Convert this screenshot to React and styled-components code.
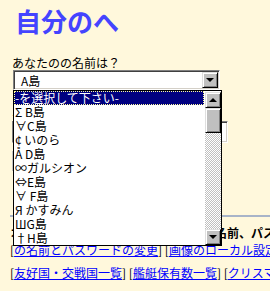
import React from 'react';
import styled, { createGlobalStyle } from 'styled-components';

const GlobalStyle = createGlobalStyle`
  html, body { margin: 0; padding: 0; background: #fff8dc; overflow: hidden; }
  body {
    font-family: "Noto Sans CJK JP", "Liberation Sans", sans-serif;
    font-size: 12px;
    color: #000;
  }
`;

const islands = [
  '-を選択して下さい-',
  'Σ B島',
  '∀C島',
  '¢ いのら',
  'Å D島',
  '∞ガルシオン',
  '⇔E島',
  '∀ F島',
  'Я かすみん',
  'ШG島',
  '†H島',
];

const Page = styled.div`
  width: 270px;
  height: 291px;
  padding-top: 8px;
  box-sizing: border-box;
  white-space: nowrap;
`;

// ----- 타이틀
const Title = styled.h1`
  margin: 0 0 0 15px;
  font-size: 26px;
  line-height: 26px;
  font-weight: bold;
  color: #4444ff;
`;

// ----- 폼
const Form = styled.div`
  margin-top: 22px;
  padding-left: 12px;
`;
const Label = styled.div`
  line-height: 14px;
  margin-top: ${p => p.gap || 0}px;
`;
const SelectWrap = styled.div`
  position: relative;
  margin-left: 1px;
  width: 207px;
`;
const SelectBox = styled.div`
  height: 20px;
  box-sizing: border-box;
  display: flex;
  align-items: center;
  background: #fff;
  border: 1px solid;
  border-color: #808080 #fff #fff #808080;
  box-shadow: inset 1px 1px #404040, inset -1px -1px #d4d0c8;
  padding: 1px 1px 1px 7px;
`;
const SelectValue = styled.span`
  flex: 1;
  font-size: 12px;
`;
const Btn3d = styled.div`
  width: 16px;
  height: ${p => p.h || 16}px;
  box-sizing: border-box;
  display: flex;
  align-items: center;
  justify-content: center;
  background: #c0c0c0;
  border: 1px solid;
  border-color: #dfdfdf #000 #000 #dfdfdf;
  box-shadow: inset 1px 1px #fff, inset -1px -1px #808080;
`;
const Arrow = styled.span`
  width: 0;
  height: 0;
  border-left: 4px solid transparent;
  border-right: 4px solid transparent;
  ${p => p.up
    ? 'border-bottom: 4px solid #000;'
    : 'border-top: 4px solid #000;'}
`;

// 열린 목록 (다른 요소 위에 뜸)
const DropList = styled.div`
  position: absolute;
  top: 100%;
  left: 0;
  width: 209px;
  height: 156px;
  box-sizing: border-box;
  border: 1px solid #000;
  background: #fff;
  display: flex;
  z-index: 2;
`;
const Options = styled.div`
  flex: 1;
  padding-right: 1px;
`;
const Option = styled.div`
  height: 14px;
  line-height: 14px;
  padding-left: 1px;
  ${p => p.active && `
    background: #000080;
    color: #fff;
    outline: 1px dotted #ffff9c;
    outline-offset: -1px;
  `}
`;
const ScrollBar = styled.div`
  width: 16px;
  display: flex;
  flex-direction: column;
  padding-top: 1px;
`;
const Track = styled.div`
  flex: 1;
  background: repeating-conic-gradient(#c0c0c0 0 25%, #fff 0 50%) 0 0 / 2px 2px;
`;

const TextInput = styled.div`
  margin-top: 3px;
  width: 216px;
  height: 22px;
  box-sizing: border-box;
  background: #fff;
  border: 1px solid;
  border-color: #808080 #fff #fff #808080;
  box-shadow: inset 1px 1px #404040, inset -1px -1px #d4d0c8;
`;
const Submit = styled.div`
  margin-top: 8px;
  width: 90px;
  height: 20px;
  background: #c0c0c0;
`;

// ----- 하단
const Rule = styled.div`
  margin: 44px 0 0 10px;
  height: 2px;
  background: #a8b4c8;
`;
const Bold = styled.div`
  margin-top: 9px;
  padding-left: 11px;
  line-height: 14px;
  font-weight: bold;
`;
const LinkRow = styled.div`
  margin-top: ${p => p.gap}px;
  padding-left: 10px;
  line-height: 14px;
`;
const Link = styled.a`
  color: #0000ff;
  text-decoration: underline;
`;

const links1 = ['の名前とパスワードの変更', '画像のローカル設定', 'オーナー情報'];
const links2 = ['友好国・交戦国一覧', '艦艇保有数一覧', 'クリスマス'];

const Links = ({ items, gap }) => (
  <LinkRow gap={gap}>
    {items.map((t, i) => (
      <React.Fragment key={i}>
        [<Link href="#">{t}</Link>]{' '}
      </React.Fragment>
    ))}
  </LinkRow>
);

export default function App() {
  return (
    <Page>
      <GlobalStyle />
      <Title>自分のへ</Title>

      <Form>
        <Label>あなたのの名前は？</Label>
        <SelectWrap>
          <SelectBox>
            <SelectValue>A島</SelectValue>
            <Btn3d><Arrow /></Btn3d>
          </SelectBox>
          <DropList>
            <Options>
              {islands.map((name, i) => (
                <Option key={i} active={i === 0}>{name}</Option>
              ))}
            </Options>
            <ScrollBar>
              <Btn3d><Arrow up /></Btn3d>
              <Btn3d h={25} />
              <Track />
              <Btn3d><Arrow /></Btn3d>
            </ScrollBar>
          </DropList>
        </SelectWrap>
        <Label gap={14}>パスワードをどうぞ！！</Label>
        <TextInput />
        <Submit />
      </Form>

      <Rule />
      <Bold>本開発計画の送信、および、あなたの名前、パスワードの変更</Bold>
      <Links items={links1} gap={3} />
      <Links items={links2} gap={9} />
    </Page>
  );
}
